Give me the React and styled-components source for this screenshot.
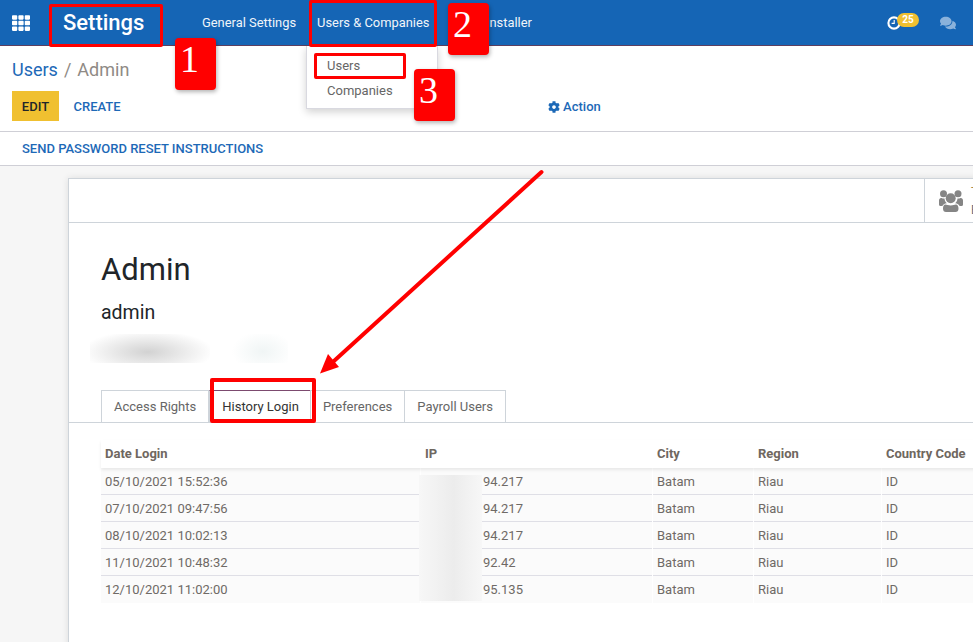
import React from "react";
import styled, { createGlobalStyle } from "styled-components";
import { FaTh, FaCog, FaComments } from "react-icons/fa";

const rows = [
  { date: "05/10/2021 15:52:36", ip: "94.217" },
  { date: "07/10/2021 09:47:56", ip: "94.217" },
  { date: "08/10/2021 10:02:13", ip: "94.217" },
  { date: "11/10/2021 10:48:32", ip: "92.42" },
  { date: "12/10/2021 11:02:00", ip: "95.135" },
];

const ClockIcon = () => (
  <svg width="14" height="14" viewBox="0 0 14 14" fill="none">
    <circle cx="7" cy="7" r="5.6" stroke="#fff" strokeWidth="2.1" />
    <path d="M7.2 4v3.4H4.6" stroke="#fff" strokeWidth="1.1" />
  </svg>
);

const UsersIcon = () => (
  <svg width="24" height="22" viewBox="0 0 24 22" fill="#858585">
    <circle cx="4.5" cy="3.7" r="3.5" />
    <circle cx="19" cy="3.7" r="3.5" />
    <circle cx="11.7" cy="8.3" r="5" />
    <path d="M0 10.5C0 8.6 1.5 7.6 3 8.2c1 .5 1.7.5 2.5.2.2 2 1 3.600 2.300 4.800C5.500 13.500 4 14.600 3.400 16H1.500C.5 16 0 15.300 0 14.500z" />
    <path d="M24 10.500c0-1.900-1.500-2.900-3-2.300-1 .5-1.700.5-2.500.2-.2 2-1 3.600-2.300 4.800 2.300.3 3.800 1.400 4.400 2.800h1.900c1 0 1.500-.7 1.500-1.500z" />
    <path d="M6.500 14.500c1.300 0 2.800 1 5.200 1s3.900-1 5.200-1c1.800 0 2.600 1.800 2.600 4.200 0 2-1.200 3.300-3 3.300H7c-1.800 0-3-1.300-3-3.300 0-2.400.7-4.200 2.500-4.200z" />
  </svg>
);

const App = () => {
  return (
    <Page>
      <GlobalStyle />
      <NavBar>
        <AppsIcon>
          <FaTh size={18} />
        </AppsIcon>
        <Brand>Settings</Brand>
        <NavMenu>
          <NavItem>General Settings</NavItem>
          <NavItem>Users &amp; Companies</NavItem>
          <NavItem $pushed>Installer</NavItem>
        </NavMenu>
        <Systray>
          <ClockWrap>
            <ClockIcon />
            <Counter>25</Counter>
          </ClockWrap>
          <ChatIcon>
            <FaComments size={16} />
          </ChatIcon>
        </Systray>
      </NavBar>

      <Dropdown>
        <DropItem>Users</DropItem>
        <DropItem>Companies</DropItem>
      </Dropdown>

      <ControlPanel>
        <Breadcrumb>
          <a>Users</a>
          <Slash>/</Slash>
          <span>Admin</span>
        </Breadcrumb>
        <ButtonRow>
          <EditButton>EDIT</EditButton>
          <LinkButton>CREATE</LinkButton>
          <ActionLink>
            <FaCog size={12} />
            Action
          </ActionLink>
        </ButtonRow>
      </ControlPanel>

      <StatusBar>
        <LinkButton>SEND PASSWORD RESET INSTRUCTIONS</LinkButton>
      </StatusBar>

      <Background>
        <Sheet>
          <ButtonBox>
            <StatButton>
              <UsersIcon />
              <StatText>
                <StatValue>T</StatValue>
                <StatLabel>E</StatLabel>
              </StatText>
            </StatButton>
          </ButtonBox>
          <SheetBody>
            <Title>Admin</Title>
            <Login>admin</Login>
            <Tabs>
              <Tab>Access Rights</Tab>
              <Tab $active>History Login</Tab>
              <Tab>Preferences</Tab>
              <Tab>Payroll Users</Tab>
            </Tabs>
            <TableWrap>
              <HeadRow>
                <HeadCell>Date Login</HeadCell>
                <HeadCell>IP</HeadCell>
                <HeadCell>City</HeadCell>
                <HeadCell>Region</HeadCell>
                <HeadCell>Country Code</HeadCell>
              </HeadRow>
              {rows.map((row, i) => {
                const last = i === rows.length - 1;
                return (
                  <Row key={row.date}>
                    <Cell $last={last}>{row.date}</Cell>
                    <IpCell $last={last}>{row.ip}</IpCell>
                    <Cell $last={last}>Batam</Cell>
                    <Cell $last={last}>Riau</Cell>
                    <Cell $last={last}>ID</Cell>
                  </Row>
                );
              })}
            </TableWrap>
          </SheetBody>
        </Sheet>
      </Background>

      <BlurName />
      <BlurMail />
      <BlurIp />

      <RedBox $x={49} $y={4} $w={114} $h={43} />
      <RedBox $x={309} $y={0} $w={128} $h={47} />
      <RedBox $x={314} $y={53} $w={92} $h={26} />
      <RedBox $x={210} $y={378} $w={106} $h={45} $thick />
      <Step $x={175} $y={38}>1</Step>
      <Step $x={448} $y={3}>2</Step>
      <Step $x={414} $y={69}>3</Step>

      <ArrowLayer viewBox="0 0 973 642">
        <line x1="541.5" y1="172" x2="334" y2="361" stroke="#ff0000" strokeWidth="4" strokeLinecap="round" />
        <polygon points="320,373.5 328,354 339,367" fill="#ff0000" />
      </ArrowLayer>
    </Page>
  );
};

export default App;

const GlobalStyle = createGlobalStyle`
  html, body {
    margin: 0;
    padding: 0;
    background: #fff;
  }
  body {
    font-family: Roboto, "Liberation Sans", sans-serif;
    font-size: 13px;
    color: #666;
  }
`;

const Page = styled.div`
  position: relative;
  width: 973px;
  height: 642px;
  overflow: hidden;
  display: flex;
  flex-direction: column;
`;

const NavBar = styled.div`
  flex: none;
  display: flex;
  align-items: center;
  height: 45px;
  background: #1565b5;
  border-bottom: 1px solid #5d3f5f;
  color: #fff;
`;

const AppsIcon = styled.div`
  display: flex;
  width: 63px;
  padding-left: 12px;
  box-sizing: border-box;
`;

const Brand = styled.div`
  width: 128.5px;
  font-size: 22px;
  font-weight: 500;
`;

const NavMenu = styled.div`
  display: flex;
  flex: 1;
`;

const NavItem = styled.div`
  padding: 0 10.5px;
  padding-left: ${(p) => (p.$pushed ? "46px" : "10.5px")};
  font-size: 12.9px;
  color: #f1f5fa;
`;

const Systray = styled.div`
  display: flex;
  align-items: center;
  gap: 20px;
  padding-right: 17px;
`;

const ClockWrap = styled.div`
  position: relative;
  display: flex;
  width: 33px;
`;

const Counter = styled.span`
  position: absolute;
  left: 10px;
  top: -3px;
  width: 22px;
  height: 14px;
  border-radius: 7px;
  background: #f0c030;
  color: #fff;
  font-size: 10px;
  font-weight: 700;
  line-height: 14px;
  text-align: center;
`;

const ChatIcon = styled.div`
  display: flex;
  color: #8ab2db;
`;

const Dropdown = styled.div`
  position: absolute;
  left: 306px;
  top: 46px;
  z-index: 2;
  width: 132px;
  height: 63px;
  padding-top: 7px;
  box-sizing: border-box;
  background: #fff;
  border: 1px solid #d9d9e0;
  border-top: 0;
  box-shadow: 0 3px 8px rgba(0, 0, 0, 0.18);
`;

const DropItem = styled.div`
  padding-left: 20px;
  height: 25px;
  line-height: 25px;
  font-size: 13px;
  color: #666;
`;

const ControlPanel = styled.div`
  flex: none;
  height: 86px;
  padding: 13px 12px 0;
  box-sizing: border-box;
  background: #fff;
  border-bottom: 1px solid #cfcfd6;
`;

const Breadcrumb = styled.div`
  display: flex;
  align-items: center;
  height: 21px;
  font-size: 18px;
  color: #8f8a85;
  a {
    color: #1d69b7;
  }
`;

const Slash = styled.span`
  margin: 0 6px;
`;

const ButtonRow = styled.div`
  display: flex;
  align-items: center;
  margin-top: 11px;
`;

const EditButton = styled.div`
  width: 47px;
  height: 30px;
  background: #f0c030;
  color: #212529;
  font-size: 13px;
  font-weight: 500;
  line-height: 31px;
  text-align: center;
`;

const LinkButton = styled.div`
  padding: 1px 14.5px 0;
  color: #1d69b7;
  font-size: 13px;
  font-weight: 500;
`;

const ActionLink = styled.div`
  display: flex;
  align-items: center;
  gap: 3px;
  margin-left: 413px;
  padding-top: 1px;
  color: #1d69b7;
  font-size: 13px;
  font-weight: 500;
`;

const StatusBar = styled.div`
  flex: none;
  display: flex;
  align-items: center;
  height: 34px;
  padding: 0 0 2px 7.5px;
  box-sizing: border-box;
  background: #fff;
  border-bottom: 1px solid #cfcfd6;
`;

const Background = styled.div`
  flex: 1;
  min-height: 0;
  padding: 12px 0 0 68px;
  background: #f6f6f6;
`;

const Sheet = styled.div`
  width: 940px;
  height: 500px;
  background: #fff;
  border: 1px solid #ced4da;
  box-shadow: 0 0 7px rgba(0, 0, 0, 0.1);
`;

const ButtonBox = styled.div`
  display: flex;
  justify-content: flex-end;
  height: 43px;
  border-bottom: 1px solid #ced4da;
`;

const StatButton = styled.div`
  display: flex;
  align-items: center;
  gap: 8px;
  width: 85px;
  padding-left: 14px;
  box-sizing: border-box;
  border-left: 1px solid #ced4da;
`;

const StatText = styled.div`
  display: flex;
  flex-direction: column;
  font-size: 12px;
  line-height: 18px;
`;

const StatValue = styled.span`
  color: #a5884f;
`;

const StatLabel = styled.span`
  color: #5f6f80;
`;

const SheetBody = styled.div`
  display: flex;
  flex-direction: column;
`;

const Title = styled.h1`
  margin: 28px 0 0 32px;
  color: #212529;
  font-size: 31px;
  font-weight: 400;
  line-height: 38px;
`;

const Login = styled.div`
  margin: 12px 0 0 32px;
  color: #212529;
  font-size: 19.5px;
  line-height: 24px;
`;

const Tabs = styled.div`
  display: flex;
  height: 32px;
  margin-top: 65px;
  padding-left: 32px;
  border-bottom: 1px solid #ced4da;
`;

const Tab = styled.div`
  height: 32px;
  margin-left: ${(p) => (p.$active ? "0" : "-1px")};
  padding: 0 ${(p) => (p.$active ? "11px" : "12px")} 0 12px;
  box-sizing: border-box;
  background: #fff;
  border: 1px solid #ced4da;
  border-bottom: 0;
  border-top-color: ${(p) => (p.$active ? "#7c4a6f" : "#ced4da")};
  color: ${(p) => (p.$active ? "#333" : "#666")};
  font-size: 13px;
  line-height: 32px;
  &:first-child {
    margin-left: 0;
  }
`;

const TableWrap = styled.div`
  margin: 17px 0 0 32px;
`;

const columns = "320px 232px 101px 128px 1fr";

const HeadRow = styled.div`
  display: grid;
  grid-template-columns: ${columns};
  height: 28px;
  box-shadow: 0 2px 3px rgba(0, 0, 0, 0.08);
  position: relative;
`;

const HeadCell = styled.div`
  padding-left: 4px;
  color: #6f6760;
  font-size: 13px;
  font-weight: 700;
  line-height: 27px;
`;

const Row = styled.div`
  display: grid;
  grid-template-columns: ${columns};
  height: 27px;
`;

const Cell = styled.div`
  margin-right: 1px;
  padding-left: 4px;
  box-sizing: border-box;
  height: 27px;
  background: #fbfbfb;
  border-bottom: ${(p) => (p.$last ? "0" : "1px solid #dfdfe6")};
  color: #6f6a66;
  font-size: 13px;
  line-height: 28px;
`;

const IpCell = styled(Cell)`
  padding-left: 62px;
`;

const BlurName = styled.div`
  position: absolute;
  left: 90px;
  top: 334px;
  width: 120px;
  height: 29px;
  background: radial-gradient(ellipse 55% 75% at 48% 62%, #d2d2d2, #fff);
`;

const BlurMail = styled.div`
  position: absolute;
  left: 232px;
  top: 334px;
  width: 56px;
  height: 29px;
  background: radial-gradient(ellipse 55% 70% at 55% 60%, #f0f5f5, #fff);
`;

const BlurIp = styled.div`
  position: absolute;
  left: 419px;
  top: 475px;
  width: 63px;
  height: 126px;
  background: linear-gradient(90deg, #f7f7f7, #ececec 55%, #f7f7f7);
`;

const RedBox = styled.div`
  position: absolute;
  left: ${(p) => p.$x}px;
  top: ${(p) => p.$y}px;
  width: ${(p) => p.$w}px;
  height: ${(p) => p.$h}px;
  box-sizing: border-box;
  border: ${(p) => (p.$thick ? "4px" : "3px")} solid #f00;
  border-radius: 2px;
  z-index: 3;
`;

const Step = styled.div`
  position: absolute;
  left: ${(p) => p.$x}px;
  top: ${(p) => p.$y}px;
  z-index: 3;
  width: 41px;
  height: 52px;
  padding-right: 12px;
  box-sizing: border-box;
  border-radius: 4px;
  background: #f00;
  box-shadow: 1px 2px 4px rgba(0, 0, 0, 0.3);
  color: #fff;
  font-family: "Liberation Serif", serif;
  font-size: 38px;
  line-height: 43px;
  text-align: center;
`;

const ArrowLayer = styled.svg`
  position: absolute;
  left: 0;
  top: 0;
  z-index: 3;
  width: 973px;
  height: 642px;
  pointer-events: none;
`;
